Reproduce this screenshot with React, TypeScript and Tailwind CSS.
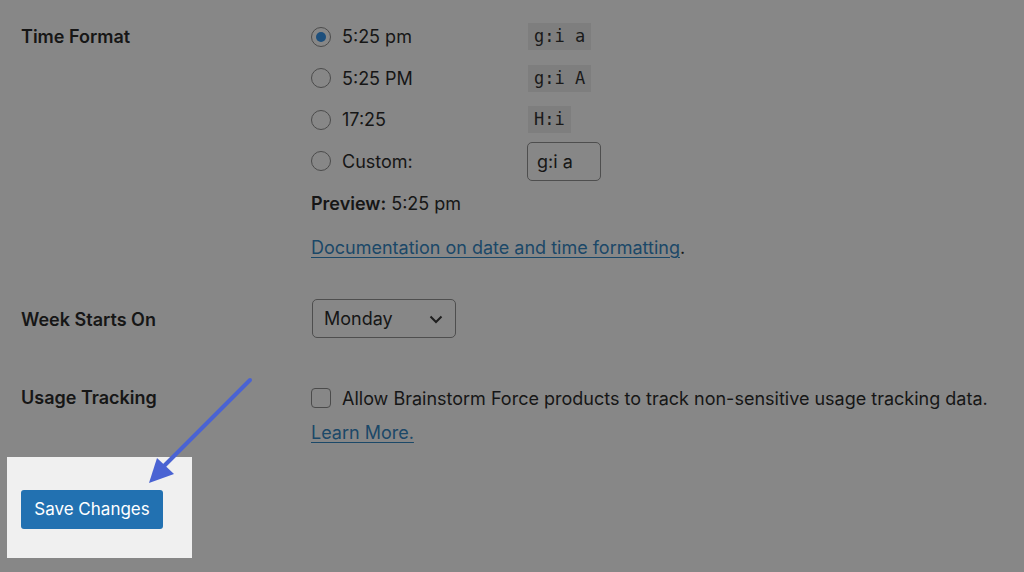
const FORMATS = [
  { label: "5:25 pm", code: "g:i a", checked: true },
  { label: "5:25 PM", code: "g:i A", checked: false },
  { label: "17:25", code: "H:i", checked: false },
];

function Radio({ checked }: { checked?: boolean }) {
  return (
    <span className="flex h-[20px] w-[20px] shrink-0 items-center justify-center rounded-full border border-[#4b4b4b]">
      {checked && <span className="h-[10px] w-[10px] rounded-full bg-[#1d4f7c]" />}
    </span>
  );
}

function Code({ children }: { children: string }) {
  return (
    <code className="flex h-[27px] items-center bg-[#7e7e7e] px-[6px] font-['DejaVu_Sans_Mono',monospace] text-[17px] text-[#1a1a1a]">
      {children}
    </code>
  );
}

export default function App() {
  return (
    <div className="relative h-[572px] w-[1024px] overflow-hidden bg-[#878787] font-['Inter',sans-serif] text-[18px] text-[#161616]">
      <div className="pl-[21px] pt-[16px]">
        {/* time format */}
        <div className="flex">
          <div className="w-[290px] pt-[9px] text-[18px] leading-[24px] font-semibold">Time Format</div>
          <div>
            {FORMATS.map((f) => (
              <div key={f.code} className="flex h-[41.5px] items-center">
                <Radio checked={f.checked} />
                <span className="ml-[11px] w-[186px]">{f.label}</span>
                <Code>{f.code}</Code>
              </div>
            ))}
            <div className="flex h-[41.5px] items-center">
              <Radio />
              <span className="ml-[11px] w-[185px]">Custom:</span>
              <div className="flex h-[39px] w-[74px] items-center rounded-[5px] border border-[#4e4e4e] px-[9px]">
                g:i a
              </div>
            </div>
            <p className="mt-[10px] leading-[24px]">
              <span className="font-semibold">Preview:</span> 5:25 pm
            </p>
            <p className="mt-[20px] leading-[24px]">
              <a href="#" className="text-[#1b4868] underline underline-offset-[3px]">
                Documentation on date and time formatting
              </a>
              .
            </p>
          </div>
        </div>

        {/* week start */}
        <div className="mt-[39px] flex items-center">
          <div className="w-[291px] pt-[2px] font-semibold">Week Starts On</div>
          <div className="flex h-[39px] w-[144px] items-center justify-between rounded-[5px] border border-[#4e4e4e] pl-[11px] pr-[9px]">
            <span>Monday</span>
            <svg width="20" height="20" viewBox="0 0 20 20" fill="none">
              <path d="M4.5 7.5l5.5 5.5 5.5-5.5" stroke="#1e1e1e" strokeWidth="2" />
            </svg>
          </div>
        </div>

        {/* usage tracking */}
        <div className="mt-[48px] flex">
          <div className="w-[290px] font-semibold leading-[24px]">Usage Tracking</div>
          <div>
            <div className="flex h-[24px] items-center">
              <span className="h-[20px] w-[20px] rounded-[4px] border border-[#4b4b4b]" />
              <span className="ml-[11px]">
                Allow Brainstorm Force products to track non-sensitive usage tracking data.
              </span>
            </div>
            <a href="#" className="mt-[11px] block leading-[24px] text-[#1b4868] underline underline-offset-[3px]">
              Learn More.
            </a>
          </div>
        </div>
      </div>

      {/* highlighted submit */}
      <div className="ml-[7px] mt-[12px] h-[101px] w-[185px] bg-[#f0f0f0] pl-[14px] pt-[33px]">
        <button className="h-[39px] w-[142px] rounded-[3px] bg-[#2271b1] font-['Inter',sans-serif] text-[17px] text-white">
          Save Changes
        </button>
      </div>

      <svg className="absolute left-0 top-0" width="1024" height="572">
        <line x1="250" y1="380" x2="163" y2="467" stroke="#4a63d3" strokeWidth="4" strokeLinecap="round" />
        <polygon points="149,483 157,458 174,474" fill="#4a63d3" />
      </svg>
    </div>
  );
}
